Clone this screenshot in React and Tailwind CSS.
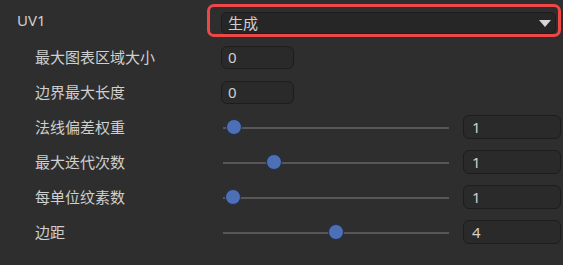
import React from 'react';

const font = { fontFamily: '"Noto Sans", "Noto Sans CJK SC", sans-serif' };

const numberRows = [
  { label: '最大图表区域大小', value: '0' },
  { label: '边界最大长度', value: '0' },
];

const sliderRows = [
  { label: '法线偏差权重', value: '1', pos: 11 },
  { label: '最大迭代次数', value: '1', pos: 51 },
  { label: '每单位纹素数', value: '1', pos: 10 },
  { label: '边距', value: '4', pos: 113 },
];

const Slider = ({ pos }) => (
  <div className="relative ml-[2px] w-[226px] h-[16px] flex items-center">
    <div className="w-full h-[2px] mt-[2px] bg-[#575757]" />
    <div
      className="absolute top-0 w-[16px] h-[16px] rounded-full bg-[#4d6fb6] border border-[#22304d]"
      style={{ left: pos - 8 }}
    />
  </div>
);

export default function App() {
  return (
    <div className="w-[563px] h-[265px] bg-[#2e2e2e] pt-[4px] text-[15px] text-[#cfcfcf] overflow-hidden" style={font}>
      {/* UV1 row with highlighted dropdown */}
      <div className="flex items-start h-[35px]">
        <div className="w-[207px] pl-[17px] pt-[6px] leading-[20px]">UV1</div>
        <div className="w-[354px] h-[33px] border-[3px] border-[#ee4747] rounded-[7px] flex items-end">
          <div className="ml-[11px] mr-[2px] flex-1 h-[22px] bg-[#262626] border border-[#1c1c1c] rounded-[5px] flex items-center justify-between pl-[6px] pr-[4px]">
            <span className="leading-[20px]">生成</span>
            <svg width="12" height="7" viewBox="0 0 12 7">
              <path d="M0 0 L12 0 L6 7 Z" fill="#d6d6d6" />
            </svg>
          </div>
        </div>
      </div>

      {numberRows.map((row) => (
        <div key={row.label} className="flex items-center h-[35px]">
          <div className="w-[221px] pl-[35px] leading-[20px]">{row.label}</div>
          <div className="w-[73px] h-[23px] mt-[1px] bg-[#2a2a2a] border border-[#1d1d1d] rounded-[6px] flex items-center pl-[6px] leading-[20px]">
            {row.value}
          </div>
        </div>
      ))}

      {sliderRows.map((row) => (
        <div key={row.label} className="flex items-center h-[35px]">
          <div className="w-[221px] pl-[35px] leading-[20px]">{row.label}</div>
          <Slider pos={row.pos} />
          <div className="ml-[14px] w-[98px] h-[24px] bg-[#2a2a2a] border border-[#1d1d1d] rounded-[6px] flex items-center pl-[8px] leading-[20px]">
            {row.value}
          </div>
        </div>
      ))}
    </div>
  );
}
